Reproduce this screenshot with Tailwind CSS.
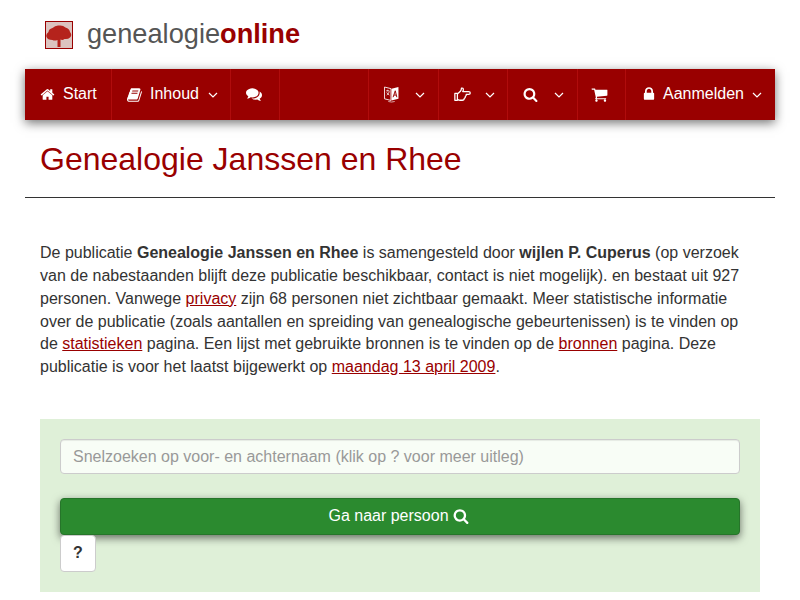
<!DOCTYPE html>
<html lang="en">
<head>
    <meta charset="UTF-8">
    <meta name="viewport" content="width=device-width, initial-scale=1.0">
    <script src="https://cdn.jsdelivr.net/npm/@tailwindcss/browser@4"></script>
    <title>Genealogie Janssen en Rhee</title>
</head>
<body class="bg-white font-['Liberation_Sans',sans-serif] text-[16px] leading-[22.857px] text-[#333] h-[600px] overflow-hidden">
  <div class="w-[750px] mx-auto">

    <!-- logo -->
    <div class="h-[69px] pl-[20px] flex items-center">
      <svg class="w-[28px] h-[28px] mt-[1px]" viewBox="0 0 28 28">
        <rect x="0.5" y="0.5" width="27" height="27" fill="#dcc4c0" stroke="#990000"/>
        <path class="blur-[0.5px]" d="M12.500 26v-7q-3 1-5 0-5 0-6-3-1-3 2-5 0-3 4-4 3-3 6.500-2.500 4-.5 6.500 2 4 1 4.500 4.500 2.500 3 0 5.500-2 2-5.500 1.500-2 1.500-4 .5v7.500z" fill="#b5231c"/>
      </svg>
      <div class="ml-[14px] -mt-[1px] text-[27.200px] leading-[32px] text-[#555]">genealogie<b class="text-[#990000]">online</b></div>
    </div>

    <!-- nav -->
    <nav class="h-[51px] bg-[#990000] text-white flex shadow-[0_3px_10px_rgba(0,0,0,0.55)]">
      <a class="w-[87px] flex items-center pl-[15px] gap-[8px] border-r border-[#b00c0c]">
        <svg class="w-[15px] h-[15px] fill-white" viewBox="0 0 1792 1792"><path d="M1472 992v480q0 26-19 45t-45 19h-384v-384h-256v384h-384q-26 0-45-19t-19-45v-480q0-1 .5-3t.5-3l575-474 575 474q1 2 1 6zm223-69l-62 74q-8 9-21 11h-3q-13 0-21-7l-692-577-692 577q-12 8-24 7-13-2-21-11l-62-74q-8-10-7-23.500t11-21.500l719-599q32-26 76-26t76 26l244 204v-195q0-14 9-23t23-9h192q14 0 23 9t9 23v408l219 182q10 8 11 21.500t-7 23.500z"/></svg>
        <span>Start</span>
      </a>
      <a class="w-[119px] flex items-center pl-[15px] border-r border-[#b00c0c]">
        <svg class="w-[16px] h-[16px] fill-white" viewBox="0 0 1792 1792"><path d="M1639 478q40 57 18 129l-275 906q-19 64-76.500 107.500t-122.500 43.500h-923q-77 0-148.500-53.500t-99.500-131.500q-24-67-2-127 0-4 3-27t4-37q1-8-3-21.500t-3-19.500q2-11 8-21t16.500-23.500 16.500-23.500q23-38 45-91.500t30-91.500q3-10 .5-30t-.5-28q3-11 17-28t17-23q21-36 42-92t25-90q1-9-2.500-32t.5-28q4-13 22-30.500t22-22.500q19-26 42.500-84.500t27.500-96.500q1-8-3-25.500t-2-26.500q2-8 9-18t18-23 17-21q8-12 16.500-30.500t15-35 16-36 19.500-32 26.500-23.500 36-11.500 47.500 5.500l-1 3q38-9 51-9h761q74 0 114 56t18 130l-274 906q-36 119-71.500 153.500t-128.500 34.500h-869q-27 0-38 15-11 16-1 43 24 70 144 70h923q29 0 56-15.500t35-41.500l300-987q7-22 5-57 38 15 59 43zm-1064 2q-4 13 2 22.500t20 9.500h608q13 0 25.500-9.500t16.500-22.500l21-64q4-13-2-22.500t-20-9.500h-608q-13 0-25.500 9.500t-16.500 22.500zm-83 256q-4 13 2 22.500t20 9.500h608q13 0 25.500-9.500t16.500-22.500l21-64q4-13-2-22.500t-20-9.500h-608q-13 0-25.500 9.500t-16.500 22.500z"/></svg>
        <span class="ml-[7px]">Inhoud</span>
        <svg class="w-[10px] h-[6px] ml-[9px] mt-[1px]" viewBox="0 0 10 6"><path d="M1 1l4 4 4-4" fill="none" stroke="white" stroke-width="1.200"/></svg>
      </a>
      <a class="w-[49px] flex items-center pl-[15px] border-r border-[#b00c0c]">
        <svg class="w-[16px] h-[16px] -mt-[1px] fill-white" viewBox="0 0 1792 1792"><path d="M1408 768q0 139-94 257t-256.500 186.500-353.500 68.500q-86 0-176-16-124 88-278 128-36 9-86 16h-3q-11 0-20.500-8t-11.500-21q-1-3-1-6.500t.5-6.500 2-6l2.500-5 3.500-5.500 4-5 4.500-5 4-4.500q5-6 23-25t26-29.500 22.500-29 25-38.500 20.500-44q-124-72-195-177t-71-224q0-139 94-257t256.500-186.500 353.500-68.500 353.500 68.500 256.500 186.500 94 257zm384 256q0 120-71 224.500t-195 176.500q10 24 20.500 44t25 38.500 22.500 29 26 29.500 23 25q1 1 4 4.500t4.500 5 4 5 3.500 5.500l2.500 5 2 6 .5 6.500-1 6.500q-3 14-13 22t-22 7q-50-7-86-16-154-40-278-128-90 16-176 16-271 0-472-132 58 4 88 4 161 0 309-45t264-129q125-92 192-212t67-254q0-77-23-152 129 71 204 178t75 230z"/></svg>
      </a>

      <div class="ml-auto flex">
        <a class="w-[70px] flex items-center pl-[15px] border-l border-[#b00c0c]">
          <svg class="w-[15px] h-[18px] -mt-[1px]" viewBox="0 0 14 16">
            <path d="M0.500 1.500l6 1.500v11l-6-1.500z" fill="none" stroke="white" stroke-width="0.800"/>
            <path d="M7 3l6.500-1.500v11L7 14z" fill="white"/>
            <path d="M2 5h3M3.500 4v1.500M2.500 9q2-1 2.500-3.500M2.500 6.500q1 2 2.500 2.500" fill="none" stroke="white" stroke-width="0.700"/>
            <path d="M8.500 11l2-6 1.500 6M9.300 9h2" fill="none" stroke="#990000" stroke-width="0.900"/>
            <path d="M4 15q3 1 6 0" fill="none" stroke="white" stroke-width="0.600"/>
          </svg>
          <svg class="w-[10px] h-[6px] ml-[16px] mt-[1px]" viewBox="0 0 10 6"><path d="M1 1l4 4 4-4" fill="none" stroke="white" stroke-width="1.200"/></svg>
        </a>
        <a class="w-[69px] flex items-center pl-[15px] border-l border-[#b00c0c]">
          <svg class="w-[17px] h-[15px]" viewBox="0 0 16 14">
            <path d="M0.800 6h2.400v6.500H0.800zM3.200 6.500l2.800-2.500q1-1.500 1-3 1.800-.3 1.800 1.500 0 1-.6 1.700h5.600q1.500 0 1.500 1.300t-1.500 1.300h-2.300q.4 1.500-.8 2 .2 1.400-1 1.800 0 1.800-2 1.800H6q-1.500 0-2.800-1" fill="none" stroke="white" stroke-width="1.200" stroke-linejoin="round"/>
          </svg>
          <svg class="w-[10px] h-[6px] ml-[14px] mt-[1px]" viewBox="0 0 10 6"><path d="M1 1l4 4 4-4" fill="none" stroke="white" stroke-width="1.200"/></svg>
        </a>
        <a class="w-[70px] flex items-center pl-[15px] border-l border-[#b00c0c]">
          <svg class="w-[15px] h-[15px] -mt-[1px] fill-white" viewBox="0 0 1792 1792"><path d="M1216 832q0-185-131.500-316.500t-316.500-131.500-316.500 131.500-131.500 316.500 131.500 316.500 316.500 131.500 316.500-131.500 131.500-316.500zm512 832q0 52-38 90t-90 38q-54 0-90-38l-343-342q-179 124-399 124-143 0-273.500-55.500t-225-150-150-225-55.500-273.500 55.500-273.500 150-225 225-150 273.500-55.500 273.500 55.500 225 150 150 225 55.500 273.500q0 220-124 399l343 343q37 37 37 90z"/></svg>
          <svg class="w-[10px] h-[6px] ml-[16px] mt-[1px]" viewBox="0 0 10 6"><path d="M1 1l4 4 4-4" fill="none" stroke="white" stroke-width="1.200"/></svg>
        </a>
        <a class="w-[48px] flex items-center pl-[13px] border-l border-[#b00c0c]">
          <svg class="w-[17px] h-[17px] -mt-[1px] fill-white" viewBox="0 0 1792 1792"><path d="M704 1536q0 52-38 90t-90 38-90-38-38-90 38-90 90-38 90 38 38 90zm896 0q0 52-38 90t-90 38-90-38-38-90 38-90 90-38 90 38 38 90zm128-1088v512q0 24-16.500 42.500t-40.500 21.500l-1044 122q13 60 13 70 0 16-24 64h920q26 0 45 19t19 45-19 45-45 19h-1024q-26 0-45-19t-19-45q0-11 8-31.500t16-36 21.500-40 15.500-29.500l-177-823h-204q-26 0-45-19t-19-45 19-45 45-19h256q16 0 28.500 6.500t19.500 15.500 13 24.500 8 26 5.500 29.500 4.500 26h1201q26 0 45 19t19 45z"/></svg>
        </a>
        <a class="w-[150px] flex items-center pl-[15px] border-l border-[#b00c0c]">
          <svg class="w-[16px] h-[16px] -mt-[1px] fill-white" viewBox="0 0 1792 1792"><path d="M640 768h512v-192q0-106-75-181t-181-75-181 75-75 181v192zm832 96v576q0 40-28 68t-68 28h-960q-40 0-68-28t-28-68v-576q0-40 28-68t68-28h32v-192q0-184 132-316t316-132 316 132 132 316v192h32q40 0 68 28t28 68z"/></svg>
          <span class="ml-[6px]">Aanmelden</span>
          <svg class="w-[10px] h-[6px] ml-[8px] mt-[1px]" viewBox="0 0 10 6"><path d="M1 1l4 4 4-4" fill="none" stroke="white" stroke-width="1.200"/></svg>
        </a>
      </div>
    </nav>

    <!-- title -->
    <div class="h-[78px] border-b border-[#333] px-[15px] pt-[20px]">
      <h1 class="text-[32px] leading-[38px] text-[#990000]">Genealogie Janssen en Rhee</h1>
    </div>

    <!-- intro -->
    <p class="px-[15px] mt-[44px]">De publicatie <b>Genealogie Janssen en Rhee</b> is samengesteld door <b>wijlen P. Cuperus</b> (op verzoek van de nabestaanden blijft deze publicatie beschikbaar, contact is niet mogelijk). en bestaat uit 927 personen. Vanwege <a class="text-[#990000] underline">privacy</a> zijn 68 personen niet zichtbaar gemaakt. Meer statistische informatie over de publicatie (zoals aantallen en spreiding van genealogische gebeurtenissen) is te vinden op de <a class="text-[#990000] underline">statistieken</a> pagina. Een lijst met gebruikte bronnen is te vinden op de <a class="text-[#990000] underline">bronnen</a> pagina. Deze publicatie is voor het laatst bijgewerkt op <a class="text-[#990000] underline">maandag 13 april 2009</a>.</p>

    <!-- search panel -->
    <div class="mx-[15px] mt-[40px] h-[173px] bg-[#dff0d8] px-[20px] pt-[20px]">
      <input type="text" placeholder="Snelzoeken op voor- en achternaam (klik op ? voor meer uitleg)" class="block w-full h-[35px] px-[12px] bg-[#f8fdf6] border border-[#ccc] rounded-[4px] shadow-[inset_0_1px_1px_rgba(0,0,0,0.075)] placeholder:text-[#999] outline-none">
      <button class="mt-[24px] w-full h-[37px] flex items-center justify-center gap-[4px] bg-[#2b8a2f] border border-[#26752a] rounded-[4px] text-white shadow-[0_3px_8px_rgba(0,0,0,0.55)]">
        <span class="-ml-[3px]">Ga naar persoon</span>
        <svg class="w-[16px] h-[16px] -mt-[1px] fill-white" viewBox="0 0 1792 1792"><path d="M1216 832q0-185-131.500-316.500t-316.500-131.500-316.500 131.500-131.500 316.500 131.500 316.500 316.500 131.500 316.500-131.500 131.500-316.500zm512 832q0 52-38 90t-90 38q-54 0-90-38l-343-342q-179 124-399 124-143 0-273.500-55.500t-225-150-150-225-55.500-273.500 55.500-273.500 150-225 225-150 273.500-55.500 273.500 55.500 225 150 150 225 55.500 273.500q0 220-124 399l343 343q37 37 37 90z"/></svg>
      </button>
      <button class="relative block w-[36px] h-[37px] bg-white border border-[#ccc] rounded-[4px] font-bold text-[#333]">?</button>
    </div>
  </div>
</body>
</html>
